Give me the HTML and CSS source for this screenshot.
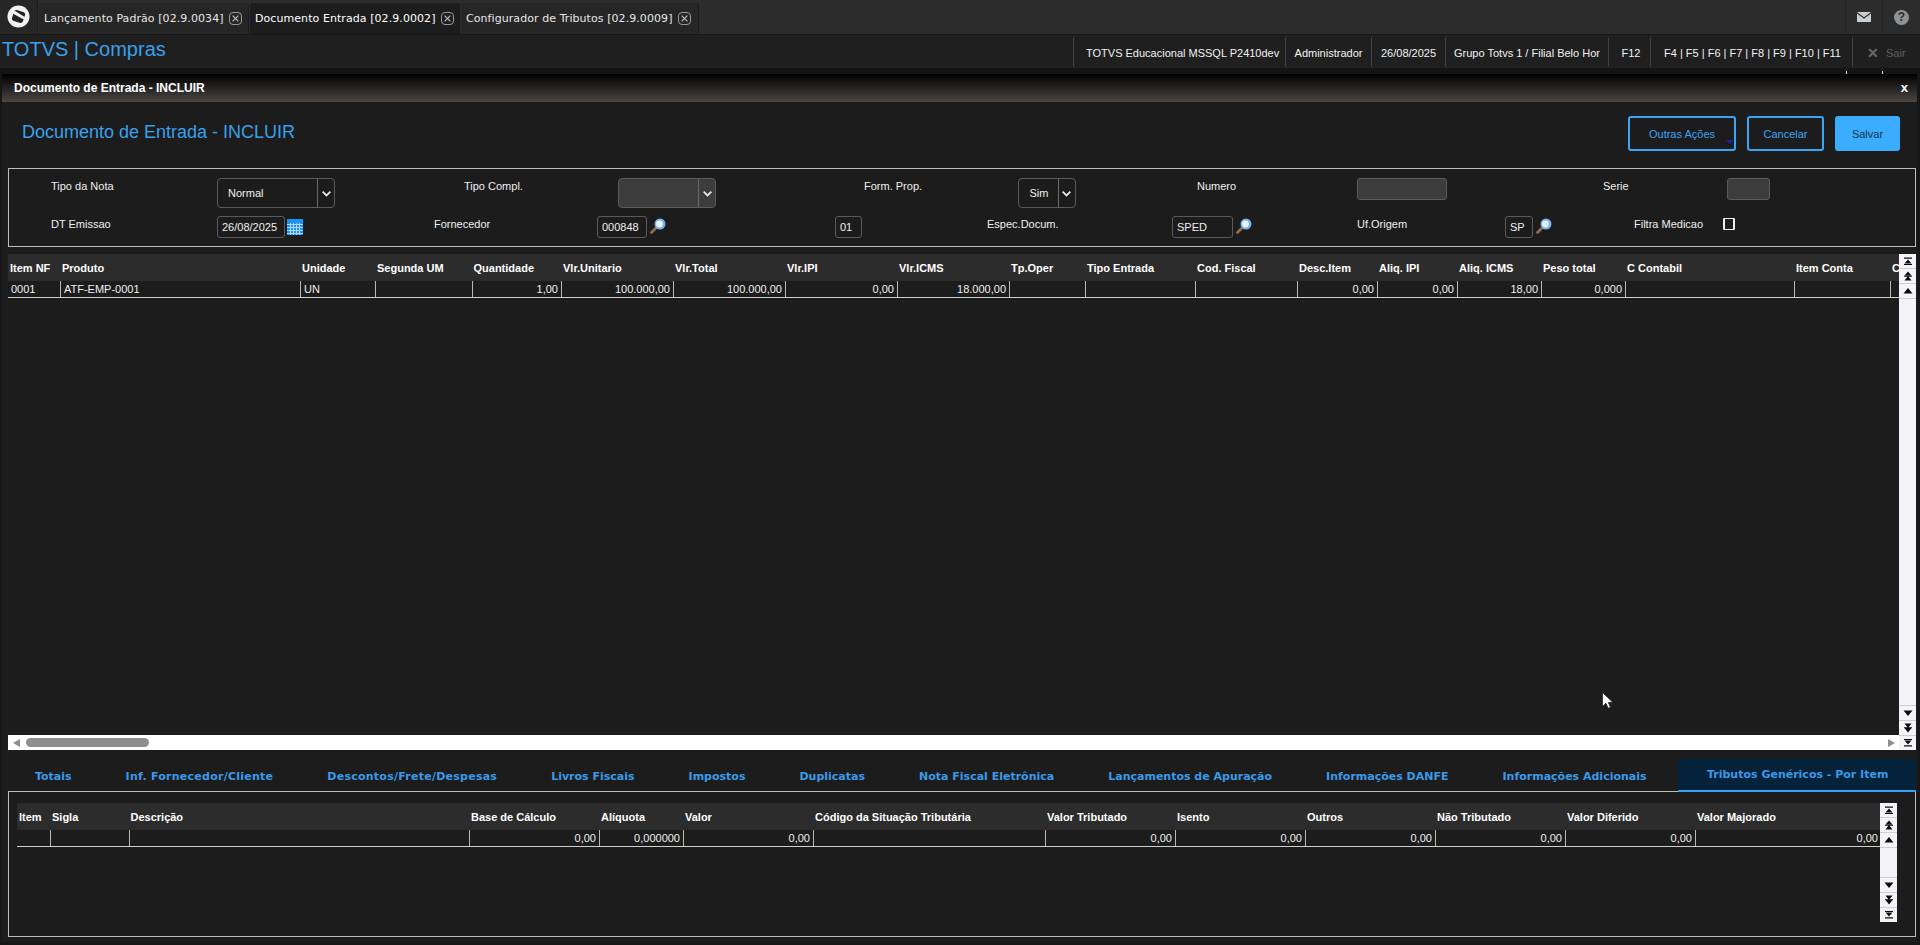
FILE: index.html
```html
<!DOCTYPE html>
<html lang="pt-BR">
<head>
<meta charset="utf-8">
<title>Documento de Entrada - INCLUIR</title>
<link rel="stylesheet" href="styles.css">
</head>
<body>
<svg class="defs" aria-hidden="true">
  <symbol id="i-first" viewBox="0 0 10 10"><path d="M1 1.5h8v1.2H1zM5 3.5l3.5 4h-7zM1 8h8v1H1z"/></symbol>
  <symbol id="i-pgup" viewBox="0 0 10 10"><path d="M5 0.5l3.5 4h-7zM1 4.8h8v.9H1zM5 5l3.5 4.5h-7z"/></symbol>
  <symbol id="i-up" viewBox="0 0 10 10"><path d="M5 2l4.5 5.5h-9z"/></symbol>
  <symbol id="i-down" viewBox="0 0 10 10"><path d="M.5 2.5h9L5 8z"/></symbol>
  <symbol id="i-pgdn" viewBox="0 0 10 10"><path d="M1.5 .5h7L5 5zM1 4.3h8v.9H1zM1.5 5h7L5 9.5z"/></symbol>
  <symbol id="i-last" viewBox="0 0 10 10"><path d="M1 1h8v1H1zM1.5 2.5h7L5 6.5zM1 7.3h8v1.2H1z"/></symbol>
  <symbol id="i-lupa" viewBox="0 0 16 16">
    <path d="M6.5 9.5L1.5 14.5" stroke="#8f6c4a" stroke-width="2.8" stroke-linecap="round" fill="none"/>
    <circle cx="10" cy="6" r="5.5" fill="#78b2e6"/>
    <circle cx="9.5" cy="6" r="3.4" fill="#e8f4fd"/>
  </symbol>
  <symbol id="i-close" viewBox="0 0 13 13">
    <rect x=".5" y=".5" width="12" height="12" rx="3.5" fill="none" stroke="#9a9a9a"/>
    <path d="M3.6 3.6l5.8 5.8M9.4 3.6L3.6 9.4" stroke="#b5b5b5" stroke-width="1.3"/>
  </symbol>
  <symbol id="i-chevron" viewBox="0 0 10 10"><path d="M1.5 3.2L5 6.8l3.5-3.6" fill="none" stroke="#e8e8e8" stroke-width="1.6"/></symbol>
</svg>

<header class="topbar">
  <div class="logo-tab">
    <svg class="logo" viewBox="0 0 24 24">
      <circle cx="12" cy="12" r="11.5" fill="#f2f2f2"/>
      <rect x="6" y="6" width="12" height="12" rx="3" transform="rotate(18 12 12)" fill="#222"/>
      <path d="M5.5 8.5L17.5 15l1 -2.5L8 6z" fill="#f2f2f2"/>
    </svg>
  </div>
  <div class="tab tab-first"><span class="tab-text">Lançamento Padrão [02.9.0034]</span><svg class="tab-close"><use href="#i-close"/></svg></div>
  <div class="tab tab-second tab-current"><span class="tab-text">Documento Entrada [02.9.0002]</span><svg class="tab-close"><use href="#i-close"/></svg></div>
  <div class="tab tab-third"><span class="tab-text">Configurador de Tributos [02.9.0009]</span><svg class="tab-close"><use href="#i-close"/></svg></div>
  <div class="top-tools">
    <div class="tool">
      <svg class="mail" viewBox="0 0 14 10"><path d="M0 0h14L7 5.2zM0 1.6l7 5.2 7-5.2V10H0z" fill="#c9cdd1"/></svg>
    </div>
    <div class="tool tool-help"><span class="help">?</span></div>
  </div>
</header>

<div class="appbar">
  <div class="app-title">TOTVS | Compras</div>
  <div class="app-info">
    <div class="info info-env">TOTVS Educacional MSSQL P2410dev</div>
    <div class="info info-user">Administrador</div>
    <div class="info info-date">26/08/2025</div>
    <div class="info info-group">Grupo Totvs 1 / Filial Belo Hor</div>
    <div class="info info-f12">F12</div>
    <div class="info info-keys">F4 | F5 | F6 | F7 | F8 | F9 | F10 | F11</div>
    <div class="info info-exit"><span class="exit-x">✕</span><span>Sair</span></div>
  </div>
</div>

<div class="ticks"><i></i><i></i></div>

<main class="modal">
  <div class="modal-title"><span>Documento de Entrada - INCLUIR</span><span class="modal-x">x</span></div>

  <div class="page-head">
    <h1>Documento de Entrada - INCLUIR</h1>
    <div class="actions">
      <button class="btn btn-more">Outras Ações<i class="btn-caret"></i></button>
      <button class="btn btn-cancel">Cancelar</button>
      <button class="btn btn-save">Salvar</button>
    </div>
  </div>

  <section class="form">
    <div class="form-row row-a">
      <i></i>
      <label>Tipo da Nota</label>
      <div class="select"><span>Normal</span><b><svg><use href="#i-chevron"/></svg></b></div>
      <i></i>
      <label>Tipo Compl.</label>
      <div class="select is-off"><span></span><b><svg><use href="#i-chevron"/></svg></b></div>
      <i></i>
      <label>Form. Prop.</label>
      <div class="select select-sm"><span>Sim</span><b><svg><use href="#i-chevron"/></svg></b></div>
      <i></i>
      <label>Numero</label>
      <div class="input is-off"></div>
      <i></i>
      <label>Serie</label>
      <div class="input is-off"></div>
    </div>
    <div class="form-row row-b">
      <i></i>
      <label>DT Emissao</label>
      <div class="input">26/08/2025</div>
      <div class="addon">
        <svg class="cal" viewBox="0 0 16 16">
          <rect width="16" height="16" fill="#1e90f0"/>
          <path d="M0 5.5h16M0 8.5h16M0 11.5h16M0 14.5h16M3.5 4v12M6.5 4v12M9.5 4v12M12.5 4v12" stroke="#a9d8fb" stroke-width="1"/>
        </svg>
      </div>
      <label>Fornecedor</label>
      <div class="input">000848</div>
      <div class="addon"><svg class="lupa"><use href="#i-lupa"/></svg></div>
      <div class="input">01</div>
      <i></i>
      <label>Espec.Docum.</label>
      <div class="input">SPED</div>
      <div class="addon"><svg class="lupa"><use href="#i-lupa"/></svg></div>
      <label>Uf.Origem</label>
      <div class="input">SP</div>
      <div class="addon"><svg class="lupa"><use href="#i-lupa"/></svg></div>
      <label>Filtra Medicao</label>
      <div class="check"></div>
    </div>
  </section>

  <section class="browse">
    <div class="browse-main">
      <div class="grid-wrap">
        <div class="g-head cols-items">
          <div>Item NF</div><div>Produto</div><div>Unidade</div><div>Segunda UM</div><div>Quantidade</div><div>Vlr.Unitario</div><div>Vlr.Total</div><div>Vlr.IPI</div><div>Vlr.ICMS</div><div>Tp.Oper</div><div>Tipo Entrada</div><div>Cod. Fiscal</div><div>Desc.Item</div><div>Aliq. IPI</div><div>Aliq. ICMS</div><div>Peso total</div><div>C Contabil</div><div>Item Conta</div><div class="clip">C</div>
        </div>
        <div class="g-row cols-items">
          <div>0001</div><div>ATF-EMP-0001</div><div>UN</div><div></div><div class="num">1,00</div><div class="num">100.000,00</div><div class="num">100.000,00</div><div class="num">0,00</div><div class="num">18.000,00</div><div></div><div></div><div></div><div class="num">0,00</div><div class="num">0,00</div><div class="num">18,00</div><div class="num">0,000</div><div></div><div></div><div></div>
        </div>
      </div>
      <div class="hscroll">
        <i class="arrow-left"></i>
        <i class="thumb"></i>
        <i class="arrow-right"></i>
      </div>
    </div>
    <div class="vscroll">
      <div class="sb"><svg><use href="#i-first"/></svg></div>
      <div class="sb"><svg><use href="#i-pgup"/></svg></div>
      <div class="sb"><svg><use href="#i-up"/></svg></div>
      <div class="sb-fill"></div>
      <div class="sb sb-low"><svg><use href="#i-down"/></svg></div>
      <div class="sb sb-low"><svg><use href="#i-pgdn"/></svg></div>
      <div class="sb sb-low"><svg><use href="#i-last"/></svg></div>
    </div>
  </section>

  <nav class="tabs">
    <div>Totais</div>
    <div class="tabs-slash">Inf. Fornecedor/Cliente</div>
    <div class="tabs-slash">Descontos/Frete/Despesas</div>
    <div>Livros Fiscais</div>
    <div>Impostos</div>
    <div>Duplicatas</div>
    <div>Nota Fiscal Eletrônica</div>
    <div>Lançamentos de Apuração</div>
    <div>Informações DANFE</div>
    <div>Informações Adicionais</div>
    <div class="tabs-on">Tributos Genéricos - Por Item</div>
  </nav>

  <section class="panel">
    <div class="grid-wrap panel-grid">
      <div class="g-head cols-tax">
        <div>Item</div><div>Sigla</div><div>Descrição</div><div>Base de Cálculo</div><div>Alíquota</div><div>Valor</div><div>Código da Situação Tributária</div><div>Valor Tributado</div><div>Isento</div><div>Outros</div><div>Não Tributado</div><div>Valor Diferido</div><div>Valor Majorado</div>
      </div>
      <div class="g-row cols-tax">
        <div></div><div></div><div></div><div class="num">0,00</div><div class="num">0,000000</div><div class="num">0,00</div><div></div><div class="num">0,00</div><div class="num">0,00</div><div class="num">0,00</div><div class="num">0,00</div><div class="num">0,00</div><div class="num">0,00</div>
      </div>
    </div>
    <div class="vscroll vscroll-sm">
      <div class="sb"><svg><use href="#i-first"/></svg></div>
      <div class="sb"><svg><use href="#i-pgup"/></svg></div>
      <div class="sb"><svg><use href="#i-up"/></svg></div>
      <div class="sb-fill"></div>
      <div class="sb sb-low"><svg><use href="#i-down"/></svg></div>
      <div class="sb sb-low"><svg><use href="#i-pgdn"/></svg></div>
      <div class="sb sb-low"><svg><use href="#i-last"/></svg></div>
    </div>
  </section>
</main>

<svg class="cursor" viewBox="0 0 11 17"><path d="M.5.5v14l3.4-3.2 2.3 5 2.3-1-2.2-4.9h4.6z" fill="#fff" stroke="#111" stroke-width=".7"/></svg>
</body>
</html>
```
FILE: styles.css
```css
* { box-sizing: border-box; }
html, body { margin: 0; height: 945px; overflow: hidden; }
body {
  background: #161616;
  color: #f0f0f0;
  font: 11px/16px "Liberation Sans", Arial, sans-serif;
}
.defs { position: absolute; width: 0; height: 0; }

/* top strip */
.topbar {
  display: flex;
  height: 35px;
  background: #2c2c2c;
  border-bottom: 1px solid #181818;
}
.logo-tab { width: 38px; display: flex; align-items: center; justify-content: center; background: #262626; border-right: 1px solid #1c1c1c; padding-right: 1px; }
.logo { width: 23px; height: 23px; margin-top: -1px; }
.tab {
  display: flex;
  align-items: center;
  margin-top: 3px;
  padding-left: 5px;
  background: #262626;
  border-right: 1px solid #1c1c1c;
  border-top-left-radius: 3px;
  border-top-right-radius: 3px;
  font: 11px/14px "DejaVu Sans", sans-serif;
  letter-spacing: .07px;
  color: #e6e6e6;
  margin-right: 1px;
}
.tab-first { width: 210px; margin-left: 1px; }
.tab-second { width: 210px; }
.tab-third { width: 238px; }
.tab-current { background: #1d1d1d; color: #fff; }
.tab-text { white-space: nowrap; }
.tab-close { width: 13px; height: 13px; margin-left: 5px; }
.top-tools { margin-left: auto; display: flex; }
.tool { width: 37px; display: flex; align-items: center; justify-content: center; background: #2c2c2c; border-left: 1px solid #222; }
.tool-help { width: 38px; }
.mail { width: 14px; height: 10px; }
.help {
  width: 15px; height: 15px; border-radius: 50%;
  background: #8d9296; color: #2c2c2c;
  font: bold 12px/15px "Liberation Sans", sans-serif; text-align: center;
}

/* application bar */
.appbar { display: flex; height: 33px; background: #1f1f1f; justify-content: space-between; }
.app-title { padding-left: 2px; font-size: 20px; line-height: 28px; color: #3aa0ea; }
.app-info { display: flex; margin-top: 1px; }
.info { display: flex; align-items: center; padding-top: 2px; border-left: 1px solid #444; border-top-left-radius: 3px; border-bottom-left-radius: 3px; justify-content: center; white-space: nowrap; color: #f2f2f2; }
.info-env { width: 212px; padding-left: 12px; justify-content: flex-start; }
.info-user { width: 86px; }
.info-date { width: 74px; }
.info-group { width: 163px; }
.info-f12 { width: 42px; padding-left: 3px; }
.info-keys { width: 202px; padding-left: 2px; }
.info-exit { width: 68px; color: #5f5f5f; justify-content: flex-start; padding-left: 14px; gap: 7px; }
.exit-x { font-size: 14px; font-weight: bold; color: #6a6a6a; }
.ticks { height: 6px; background: #141414; display: flex; justify-content: flex-end; padding-right: 37px; gap: 35px; align-items: flex-start; padding-top: 3px; }
.ticks i { width: 1px; height: 3px; background: #ddd; }

/* modal */
.modal { margin: 0 3px 0 2px; height: 868px; background: #1c1c1c; }
.modal-title {
  height: 28px;
  display: flex; align-items: center; justify-content: space-between;
  padding: 0 9px 0 12px;
  background: linear-gradient(#000, #4a4644);
  color: #fff; font-size: 12px; font-weight: bold;
}
.modal-x { font-size: 13px; }
.page-head { display: flex; justify-content: space-between; height: 66px; padding: 14px 17px 0 20px; }
h1 { margin: 1px 0 0; font-size: 18px; font-weight: normal; line-height: 30px; color: #3aa0ea; }
.actions { display: flex; align-items: flex-start; }
.btn {
  position: relative;
  height: 35px; border: 2px solid #3aa5f5; border-radius: 3px;
  background: transparent; color: #3aa5f5;
  font: 11px "Liberation Sans", sans-serif; padding: 0;
}
.btn-more { width: 108px; margin-right: 11px; }
.btn-cancel { width: 77px; margin-right: 11px; }
.btn-save { width: 65px; background: #3badff; border-color: #3badff; color: #153650; }
.btn-caret { position: absolute; right: 0; bottom: 5px; border: 4.5px solid transparent; border-top-color: #1a25a8; border-bottom: 0; }

/* form */
.form { margin: 0 1px 0 6px; height: 79px; border: 1px solid #bdbdbd; padding: 9px 0 0; }
.form-row { display: grid; align-items: start; }
.form-row label { display: block; line-height: 16px; color: #f0f0f0; }
.row-a { height: 30px; grid-template-columns: 42px 166px 118px 129px 154px 98px 148px 153.5px 58px 121.5px 160px 90px 156px 124px 43px; }
.row-b { height: 22px; margin-top: 8px; grid-template-columns: 42px 166px 68px 149px 163px 50px 188px 27px 125px 185px 61px 124px 148px 28px 101px 89px 12px; }
.select {
  display: flex; height: 30px;
  border: 1px solid #5a5a5a; border-radius: 4px;
  line-height: 28px;
}
.select span { flex: 1; padding-left: 10px; }
.select b { width: 17px; border-left: 1px solid #6a6a6a; display: flex; align-items: center; justify-content: center; }
.select svg { width: 11px; height: 11px; }
.select-sm span { padding-left: 11px; }
.is-off { background: #3c3c3c; }
.input {
  height: 22px; border: 1px solid #5a5a5a; border-radius: 3px;
  padding-left: 4px; line-height: 21px; overflow: hidden; white-space: nowrap;
}
.addon { height: 22px; padding: 2px 0 0 3px; }
.cal { display: block; width: 16px; height: 16px; margin-left: -1px; margin-top: 1px; }
.lupa { display: block; width: 16px; height: 16px; }
.check { width: 12px; height: 12px; margin-top: 2px; border: 2px solid #eee; border-top-width: 1px; border-bottom-width: 1px; border-radius: 1px; }

/* browse grids */
.browse { display: flex; margin: 7px 1px 0 6px; height: 496px; }
.browse-main { flex: 1; display: flex; flex-direction: column; }
.grid-wrap { flex: 1; min-width: 0; }
.cols-items { grid-template-columns: 52px 240px 75px 96.5px 89.5px 112px 112px 112px 112px 76px 110px 102px 80px 80px 84px 84px 169px 96px 9px; }
.cols-tax { grid-template-columns: 33px 78.5px 340.5px 130px 84px 130px 232px 130px 130px 130px 130px 130px 186px; }
.g-head {
  display: grid; height: 27px; background: #2c2c2c;
  font: bold 11px/28px "Liberation Sans", sans-serif; color: #fff;
}
.g-head > div { padding-left: 2px; white-space: nowrap; overflow: hidden; }
.g-row { display: grid; height: 17px; border-bottom: 1px solid #d0d0d0; }
.g-row > div { border-left: 1px solid #b8b8b8; padding: 0 3px; line-height: 16px; font-size: 11px; }
.g-row > div:first-child { border-left: 0; }
.num { text-align: right; }
.hscroll { position: relative; display: flex; align-items: center; height: 15px; background: #fff; padding: 0 4px 0 5px; }
.arrow-left { border: 4.5px solid transparent; border-right: 7px solid #8e8e8e; border-left: 0; }
.thumb { width: 123px; height: 9px; margin-left: 6px; background: #8e8e8e; border-radius: 5px; }
.arrow-right { margin-left: auto; border: 4.5px solid transparent; border-left: 7px solid #8e8e8e; border-right: 0; }
.vscroll { width: 17px; display: flex; flex-direction: column; background: #f4f4f8; color: #000; }
.sb { height: 15px; display: flex; align-items: center; justify-content: center; border-bottom: 1px solid #cfcfcf; }
.sb svg { width: 10px; height: 10px; fill: #0c0c0c; }
.sb-low { border-bottom: 0; border-top: 1px solid #cfcfcf; }
.sb-fill { flex: 1; }

/* folders */
.tabs {
  display: flex; margin: 9px 1px 0 6px; height: 33px;
  border-bottom: 1px solid #bdbdbd;
  font: bold 11px/35px "DejaVu Sans", sans-serif; color: #3a9ae8;
}
.tabs > div { flex: none; padding: 0 27px; white-space: nowrap; }
.tabs .tabs-slash { letter-spacing: .25px; }
.tabs .tabs-on { margin-left: auto; width: 238px; height: 33px; padding: 0 0 0 29px; line-height: 32px; background: #04223a; border-bottom: 2px solid #35a3f0; border-radius: 4px 4px 0 0; }
.panel {
  display: flex; align-items: flex-start;
  margin: 0 1px 0 6px; height: 145px;
  border: 1px solid #bdbdbd; border-top: 0;
  padding: 11px 18px 0 8px;
}
.panel-grid { flex: 1; }
.vscroll-sm { height: 119px; }

.cursor { position: absolute; left: 1602px; top: 692px; width: 11px; height: 17px; }
```
